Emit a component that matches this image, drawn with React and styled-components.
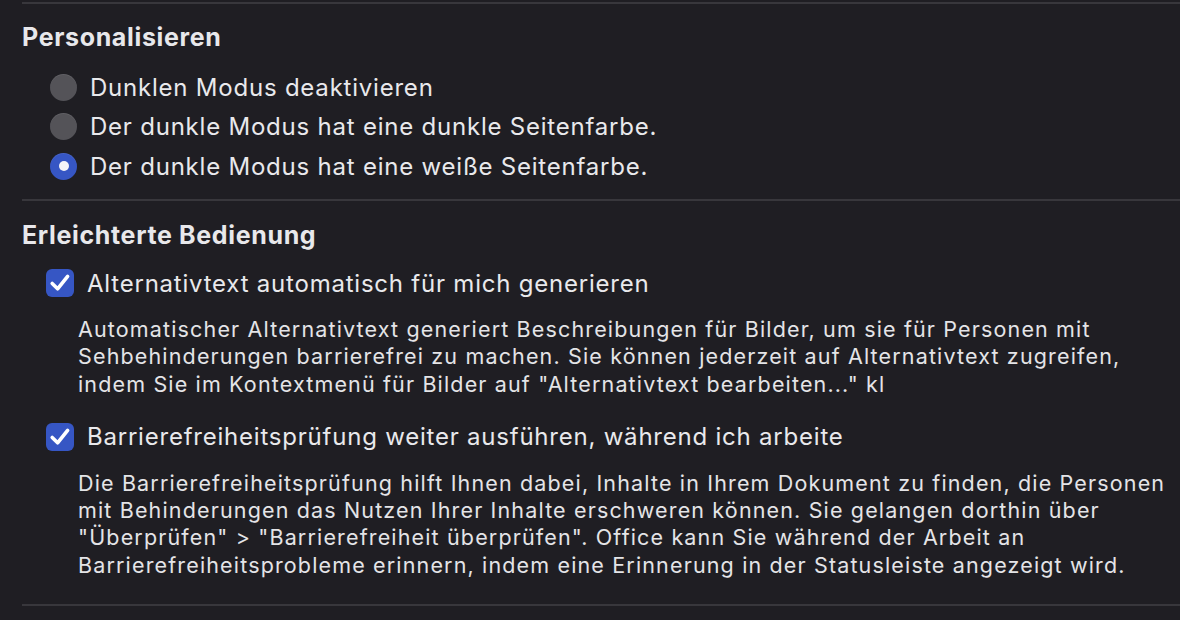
import React from "react";
import styled, { createGlobalStyle } from "styled-components";

const Global = createGlobalStyle`
  html, body { margin: 0; padding: 0; background: #1f1e23; }
  body { font-family: Inter, "Noto Sans", "Liberation Sans", sans-serif; color: #e4e4e7; -webkit-font-smoothing: antialiased; }
`;

const Page = styled.div`
  width: 1180px;
  height: 620px;
  overflow: hidden;
  padding: 2px 0 0 22px;
  box-sizing: border-box;
  background: #1f1e23;
`;

const Divider = styled.div`
  height: 2px;
  background: #38373c;
  margin: ${(p) => p.$m || "0"};
`;

const Section = styled.section`
  display: flex;
  flex-direction: column;
`;

const Heading = styled.h2`
  margin: 0;
  font-size: 25px;
  font-weight: 700;
  line-height: 30px;
  color: #e8e8eb;
  letter-spacing: 0.65px;
  margin-top: ${(p) => p.$top}px;
`;

const RadioList = styled.div`
  display: flex;
  flex-direction: column;
  padding-left: 28px;
  margin-top: 20px;
  gap: 9.5px;
`;

const Row = styled.label`
  display: flex;
  align-items: center;
  height: 30px;
  font-size: 24px;
  letter-spacing: 0.78px;
  color: #e9e9ec;
  white-space: nowrap;
  gap: ${(p) => p.$gap}px;
`;

const RadioDot = styled.span`
  width: 27px;
  height: 27px;
  border-radius: 50%;
  box-sizing: border-box;
  flex: none;
  display: flex;
  align-items: center;
  justify-content: center;
  background: ${(p) => (p.$on ? "#3656c4" : "#545358")};
  box-shadow: inset 0 1px 0 rgba(255,255,255,0.08);
  &::after {
    content: "";
    width: 10px;
    height: 10px;
    border-radius: 50%;
    background: #f4f4f8;
    display: ${(p) => (p.$on ? "block" : "none")};
  }
`;

const CheckBox = styled.span`
  width: 28px;
  height: 28px;
  border-radius: 6px;
  background: #3656c4;
  flex: none;
  display: flex;
  align-items: center;
  justify-content: center;
`;

const CheckList = styled.div`
  display: flex;
  flex-direction: column;
  padding-left: 24px;
`;

const Item = styled.div`
  display: flex;
  flex-direction: column;
  margin-top: ${(p) => p.$top}px;
`;

const Desc = styled.p`
  margin: 0;
  padding-left: 32px;
  font-size: 21.5px;
  letter-spacing: 1.15px;
  line-height: 27.3px;
  color: #e4e4e7;
  white-space: nowrap;
  margin-top: 18px;
`;

function Check() {
  return (
    <svg width="22" height="20" viewBox="0 0 22 20" fill="none">
      <path d="M3.2 10.5 L8.6 15.8 L18.6 3.4" stroke="#fff" strokeWidth="3.6" strokeLinecap="round" strokeLinejoin="round" />
    </svg>
  );
}

export default function App() {
  return (
    <>
      <Global />
      <Page>
        <Divider />
        <Section>
          <Heading $top={18}>Personalisieren</Heading>
          <RadioList>
            <Row $gap={13}><RadioDot />Dunklen Modus deaktivieren</Row>
            <Row $gap={13}><RadioDot />Der dunkle Modus hat eine dunkle Seitenfarbe.</Row>
            <Row $gap={13}><RadioDot $on />Der dunkle Modus hat eine weiße Seitenfarbe.</Row>
          </RadioList>
        </Section>
        <Divider $m="18px 0 0 0" />
        <Section>
          <Heading $top={19}>Erleichterte Bedienung</Heading>
          <CheckList>
            <Item $top={18}>
              <Row $gap={13}><CheckBox><Check /></CheckBox>Alternativtext automatisch für mich generieren</Row>
              <Desc>
                Automatischer Alternativtext generiert Beschreibungen für Bilder, um sie für Personen mit<br />
                Sehbehinderungen barrierefrei zu machen. Sie können jederzeit auf Alternativtext zugreifen,<br />
                indem Sie im Kontextmenü für Bilder auf "Alternativtext bearbeiten..." kl
              </Desc>
            </Item>
            <Item $top={24}>
              <Row $gap={13}><CheckBox><Check /></CheckBox>Barrierefreiheitsprüfung weiter ausführen, während ich arbeite</Row>
              <Desc>
                Die Barrierefreiheitsprüfung hilft Ihnen dabei, Inhalte in Ihrem Dokument zu finden, die Personen<br />
                mit Behinderungen das Nutzen Ihrer Inhalte erschweren können. Sie gelangen dorthin über<br />
                "Überprüfen" &gt; "Barrierefreiheit überprüfen". Office kann Sie während der Arbeit an<br />
                Barrierefreiheitsprobleme erinnern, indem eine Erinnerung in der Statusleiste angezeigt wird.
              </Desc>
            </Item>
          </CheckList>
        </Section>
        <Divider $m="25px 0 0 0" />
      </Page>
    </>
  );
}
